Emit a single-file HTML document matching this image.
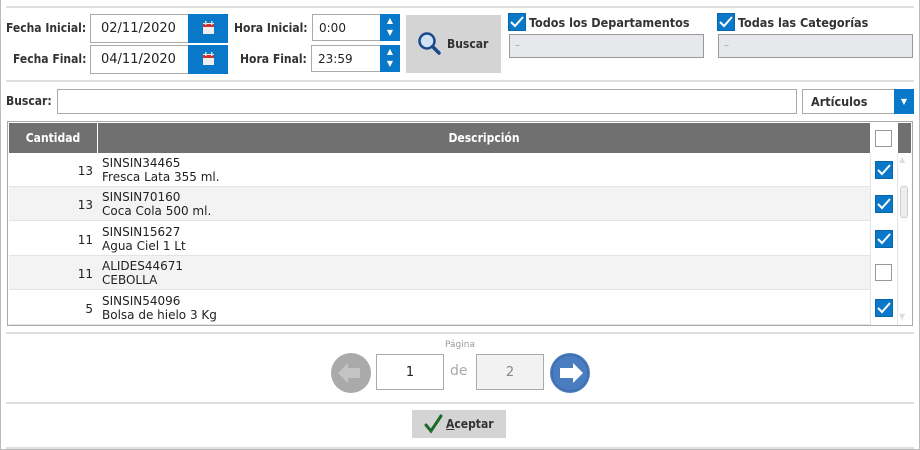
<!DOCTYPE html>
<html><head><meta charset="utf-8"><style>
*{box-sizing:border-box;margin:0;padding:0}
body{width:920px;height:450px;background:#fff;font-family:"DejaVu Sans","Liberation Sans",sans-serif;font-size:12px;color:#222;position:relative;overflow:hidden}
.a{position:absolute}
.frame{left:0;top:0;width:920px;height:450px;border:1px solid #bbb;border-top:none}
.hr{left:6px;width:908px;height:2px;background:#e0e0e0}
.lbl{font-family:"DejaVu Sans Condensed","DejaVu Sans",sans-serif;font-weight:bold;white-space:nowrap;color:#333;font-size:12px}
.in{background:#fff;border:1px solid #aaa;display:flex;align-items:center}
.blue{background:#0a78c8}
.cb{width:18px;height:18px;background:#0a78c8;border:1px solid #0866aa}
.cbe{width:17px;height:17px;background:#fff;border:1px solid #999}
.row{position:absolute;left:1px;width:861px;height:34px;border-bottom:1px solid #e4e4e4}
.row .q{position:absolute;left:0;width:88px;text-align:right;padding-right:4px;top:11px;font-size:12px}
.row .d{position:absolute;left:93px;top:3px;line-height:14px;font-size:12px}
.row .c{position:absolute;left:866px;top:8px}
</style></head><body>
<div class="a frame"></div>
<div class="a hr" style="top:6px"></div>
<div class="a hr" style="top:80px"></div>
<div class="a hr" style="top:332px"></div>
<div class="a hr" style="top:402px"></div>
<div class="a hr" style="top:447px"></div>

<div class="a lbl" style="left:6px;top:21px">Fecha Inicial:</div>
<div class="a lbl" style="left:13px;top:52px">Fecha Final:</div>
<div class="a in" style="left:90px;top:14px;width:99px;height:29px;padding-left:10px;font-size:13px">02/11/2020</div>
<div class="a in" style="left:90px;top:45px;width:99px;height:29px;padding-left:10px;font-size:13px">04/11/2020</div>
<div class="a blue" style="left:188px;top:14px;width:40px;height:29px"><svg width="40" height="29"><rect x="15" y="9" width="11" height="11" fill="#eee"/><rect x="15" y="10" width="11" height="3" fill="#c33"/><rect x="17" y="7" width="1.5" height="4" fill="#ddd"/><rect x="23" y="7" width="1.5" height="4" fill="#ddd"/></svg></div>
<div class="a blue" style="left:188px;top:45px;width:40px;height:29px"><svg width="40" height="29"><rect x="15" y="9" width="11" height="11" fill="#eee"/><rect x="15" y="10" width="11" height="3" fill="#c33"/><rect x="17" y="7" width="1.5" height="4" fill="#ddd"/><rect x="23" y="7" width="1.5" height="4" fill="#ddd"/></svg></div>

<div class="a lbl" style="left:234px;top:21px">Hora Inicial:</div>
<div class="a lbl" style="left:240px;top:52px">Hora Final:</div>
<div class="a in" style="left:312px;top:14px;width:70px;height:27px;padding-left:6px;font-size:12px">0:00</div>
<div class="a in" style="left:311px;top:45px;width:71px;height:27px;padding-left:6px;font-size:12px">23:59</div>
<div class="a blue" style="left:380px;top:14px;width:20px;height:27px;color:#fff;font-size:8px;text-align:center;line-height:12px;padding-top:1px">▲<br>▼</div>
<div class="a blue" style="left:380px;top:45px;width:20px;height:27px;color:#fff;font-size:8px;text-align:center;line-height:12px;padding-top:1px">▲<br>▼</div>

<div class="a" style="left:406px;top:15px;width:95px;height:58px;background:#d4d4d4"></div>
<svg class="a" style="left:417px;top:31px" width="26" height="26"><circle cx="10" cy="10" r="7.5" fill="#cfe3f5" stroke="#1a4a8a" stroke-width="2.5"/><line x1="15.5" y1="15.5" x2="22" y2="22" stroke="#1a4a8a" stroke-width="3.5" stroke-linecap="round"/></svg>
<div class="a lbl" style="left:447px;top:37px">Buscar</div>

<div class="a cb" style="left:508px;top:13px"><svg width="16" height="16"><path d="M2 8 L6 12 L14 3" stroke="#fff" stroke-width="2" fill="none"/></svg></div>
<div class="a lbl" style="left:529px;top:15px;font-size:12.5px">Todos los Departamentos</div>
<div class="a" style="left:509px;top:34px;width:195px;height:24px;background:#e6e8ec;border:1px solid #999;padding:5px 5px;color:#999;font-size:10px">–</div>
<div class="a cb" style="left:717px;top:13px"><svg width="16" height="16"><path d="M2 8 L6 12 L14 3" stroke="#fff" stroke-width="2" fill="none"/></svg></div>
<div class="a lbl" style="left:738px;top:15px;font-size:12.5px">Todas las Categorías</div>
<div class="a" style="left:718px;top:34px;width:195px;height:24px;background:#e6e8ec;border:1px solid #999;padding:5px 5px;color:#999;font-size:10px">–</div>

<div class="a lbl" style="left:6px;top:94px">Buscar:</div>
<div class="a in" style="left:57px;top:89px;width:740px;height:25px"></div>
<div class="a in lbl" style="left:802px;top:89px;width:112px;height:25px;padding-left:8px;font-size:12.5px">Artículos</div>
<div class="a blue" style="left:894px;top:89px;width:20px;height:25px;color:#fff;font-size:8px;text-align:center;line-height:25px">▼</div>

<div class="a" style="left:7px;top:121px;width:906px;height:205px;border:1px solid #aaa;overflow:hidden">
 <div class="a lbl" style="left:1px;top:1px;width:88px;height:30px;background:#707070;color:#fff;text-align:center;line-height:30px">Cantidad</div>
 <div class="a lbl" style="left:90px;top:1px;width:772px;height:30px;background:#707070;color:#fff;text-align:center;line-height:30px">Descripción</div>
 <div class="a" style="left:862px;top:1px;width:28px;height:30px;background:#fff"></div>
 <div class="a cbe" style="left:867px;top:8px"></div>
 <div class="a" style="left:890px;top:1px;width:13px;height:30px;background:#707070"></div>
 <div class="a" style="left:862px;top:31px;width:1px;height:175px;background:#e4e4e4"></div>
 <div class="a" style="left:889px;top:31px;width:1px;height:175px;background:#e4e4e4"></div>
 <div class="a" style="left:892px;top:64px;width:8px;height:32px;border:1px solid #ccc;border-radius:3px;background:#eee"></div>
 <div class="a" style="left:891px;top:33px;color:#ddd;font-size:8px">▲</div>
 <div class="a" style="left:891px;top:190px;color:#ddd;font-size:8px">▼</div>

 <div class="row" style="top:31px;background:#fff"><div class="q">13</div><div class="d">SINSIN34465<br>Fresca Lata 355 ml.</div><div class="c cb"><svg width="16" height="16"><path d="M2 8 L6 12 L14 3" stroke="#fff" stroke-width="2" fill="none"/></svg></div></div>
 <div class="row" style="top:65px;background:#f3f3f3"><div class="q">13</div><div class="d">SINSIN70160<br>Coca Cola 500 ml.</div><div class="c cb"><svg width="16" height="16"><path d="M2 8 L6 12 L14 3" stroke="#fff" stroke-width="2" fill="none"/></svg></div></div>
 <div class="row" style="top:100px;background:#fff"><div class="q">11</div><div class="d">SINSIN15627<br>Agua Ciel 1 Lt</div><div class="c cb"><svg width="16" height="16"><path d="M2 8 L6 12 L14 3" stroke="#fff" stroke-width="2" fill="none"/></svg></div></div>
 <div class="row" style="top:134px;background:#f3f3f3"><div class="q">11</div><div class="d">ALIDES44671<br>CEBOLLA</div><div class="c cbe"></div></div>
 <div class="row" style="top:169px;background:#fff"><div class="q">5</div><div class="d">SINSIN54096<br>Bolsa de hielo 3 Kg</div><div class="c cb"><svg width="16" height="16"><path d="M2 8 L6 12 L14 3" stroke="#fff" stroke-width="2" fill="none"/></svg></div></div>
</div>

<div class="a" style="left:430px;top:340px;width:60px;text-align:center;color:#999;font-size:9px">Página</div>
<svg class="a" style="left:330px;top:352px" width="42" height="42"><circle cx="21" cy="21" r="20" fill="#aaa"/><path d="M8 21 L18 11 L18 16 L30 16 L30 26 L18 26 L18 31 Z" fill="#c4c4c4"/></svg>
<div class="a in" style="left:376px;top:354px;width:68px;height:36px;justify-content:center;font-size:13px">1</div>
<div class="a" style="left:450px;top:363px;color:#aaa;font-size:14px">de</div>
<div class="a in" style="left:476px;top:354px;width:68px;height:36px;justify-content:center;font-size:13px;background:#f2f2f2;color:#888">2</div>
<svg class="a" style="left:549px;top:352px" width="42" height="42"><circle cx="21" cy="21" r="20" fill="#4a7cc0"/><circle cx="21" cy="21" r="18" fill="none" stroke="#3a68a8" stroke-width="1"/><path d="M34 21 L24 11 L24 16 L11 16 L11 26 L24 26 L24 31 Z" fill="#fff"/></svg>

<div class="a" style="left:412px;top:410px;width:94px;height:28px;background:#d4d4d4"></div>
<svg class="a" style="left:424px;top:414px" width="20" height="20"><path d="M2 11 L7 17 L17 2" stroke="#1a6a2a" stroke-width="3" fill="none" stroke-linecap="round"/></svg>
<div class="a lbl" style="left:446px;top:417px"><u>A</u>ceptar</div>
</body></html>
